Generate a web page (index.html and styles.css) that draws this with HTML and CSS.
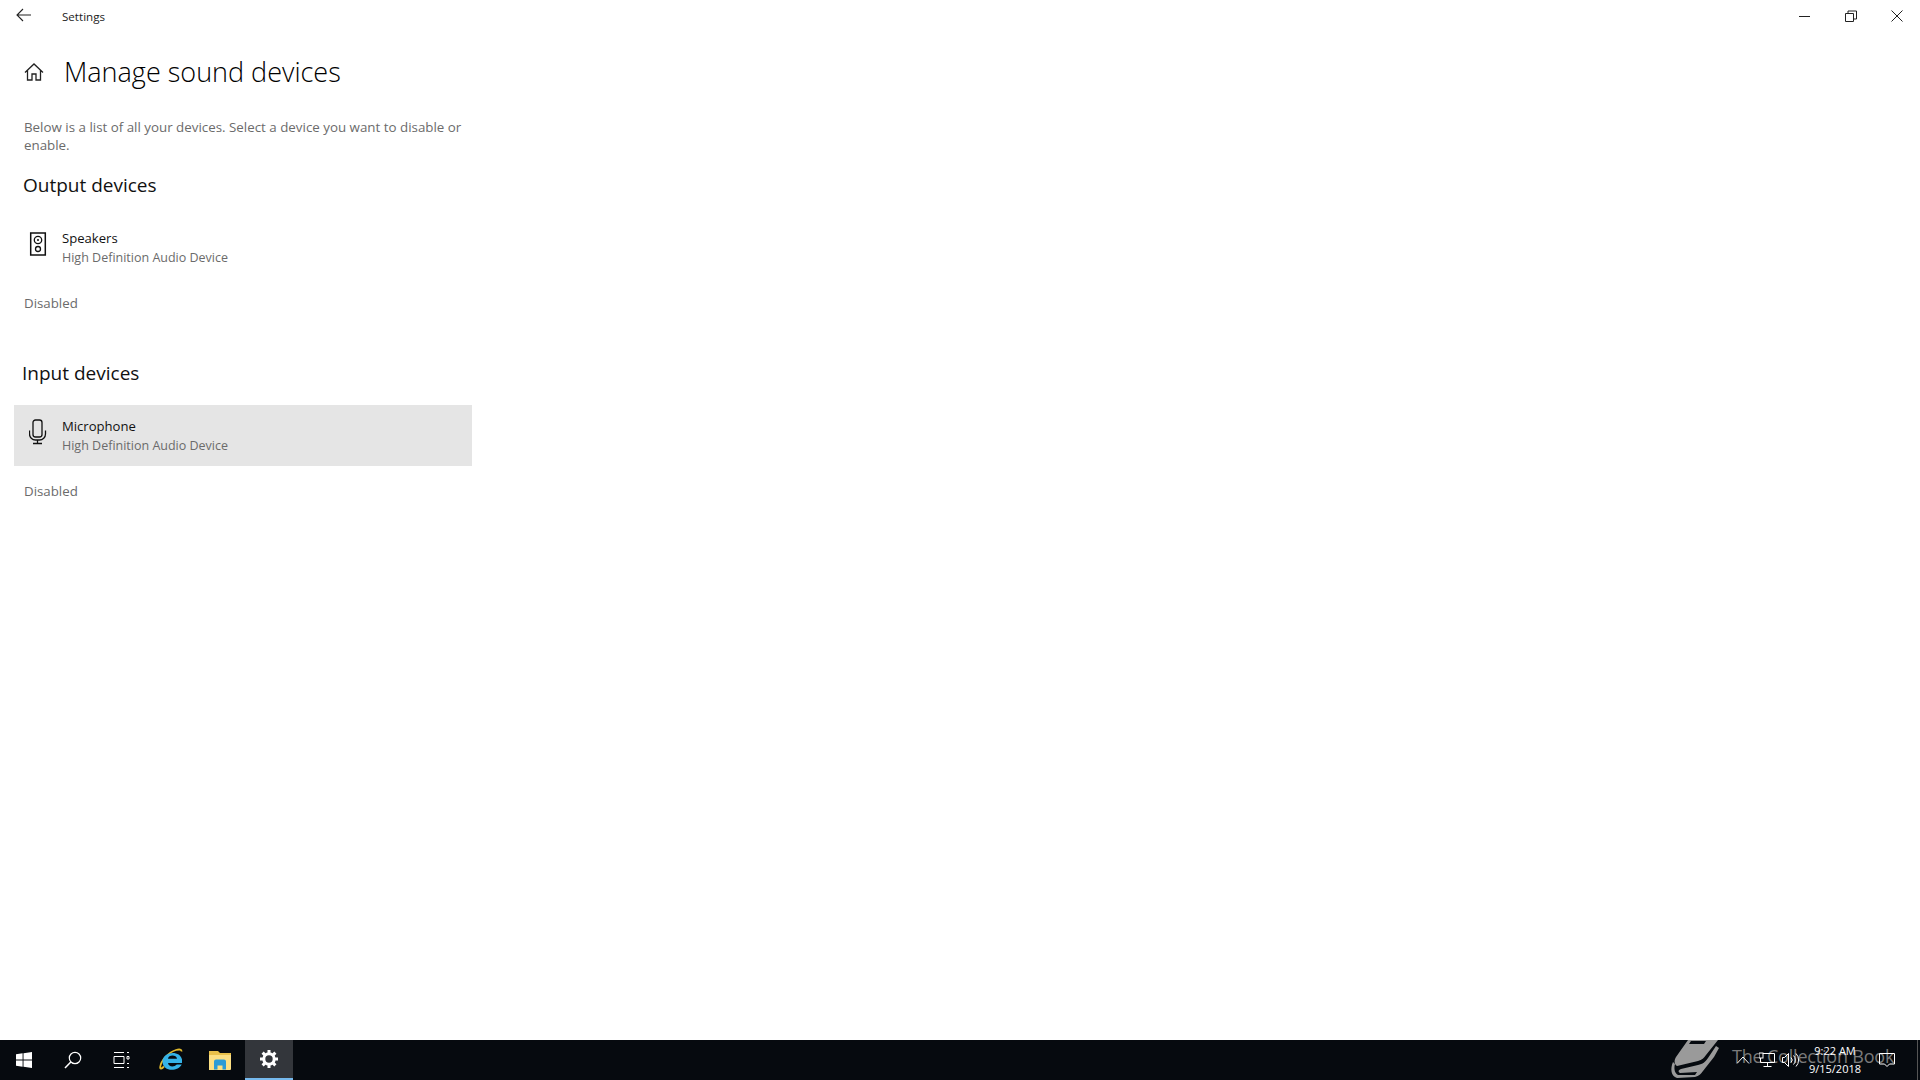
FILE: index.html
```html
<!DOCTYPE html>
<html lang="en">
<head>
<meta charset="UTF-8">
<title>Settings</title>
<link rel="stylesheet" href="styles.css">
</head>
<body>
<div class="window">
    <div class="titlebar">
        <div class="titlebar-left">
            <svg class="back-icon" width="16" height="14" viewBox="0 0 16 14"><path d="M7 1 1 7l6 6M1 7h14" fill="none" stroke="#222" stroke-width="1.1"/></svg>
            <span class="app-name">Settings</span>
        </div>
        <div class="window-buttons">
            <svg width="14" height="14" viewBox="0 0 14 14"><path d="M1 7.500h11" stroke="#222" stroke-width="1"/></svg>
            <svg width="14" height="14" viewBox="0 0 14 14"><path d="M1.500 4.500h8v8h-8zM4 4.500V2h8.500v8H9.500" fill="none" stroke="#222" stroke-width="1"/></svg>
            <svg width="14" height="14" viewBox="0 0 14 14"><path d="M1.500 1.500l11 11M12.500 1.500l-11 11" stroke="#222" stroke-width="1"/></svg>
        </div>
    </div>

    <div class="content">
        <div class="page-title">
            <svg class="home-icon" width="20" height="20" viewBox="0 0 20 20"><path d="M1 10.500 10 2l9 8.500M3.500 8.500V18H8v-6h4v6h4.500V8.500" fill="none" stroke="#222" stroke-width="1.300"/></svg>
            <h1>Manage sound devices</h1>
        </div>
        <p class="description">Below is a list of all your devices. Select a device you want to disable or enable.</p>

        <h2 class="section-first">Output devices</h2>
        <div class="device">
            <svg class="device-icon" width="18" height="24" viewBox="0 0 18 24"><rect x="1.700" y="1" width="14.600" height="22" fill="none" stroke="#111" stroke-width="1.500"/><circle cx="9" cy="8" r="3.700" fill="none" stroke="#111" stroke-width="1.300"/><circle cx="9" cy="8" r="1" fill="#111"/><circle cx="9" cy="17" r="2.500" fill="none" stroke="#111" stroke-width="1.300"/></svg>
            <div class="device-text">
                <div class="device-name">Speakers</div>
                <div class="device-sub">High Definition Audio Device</div>
            </div>
        </div>
        <div class="status">Disabled</div>

        <h2 class="section-second">Input devices</h2>
        <div class="device device-selected">
            <svg class="device-icon" width="18" height="26" viewBox="0 0 18 26"><rect x="4" y="1" width="9" height="17" rx="2.500" fill="none" stroke="#111" stroke-width="1.300"/><path d="M.5 11.500V15a6 6 0 0 0 6 6h4a6 6 0 0 0 6-6v-3.500M8.500 21v3.500M4 24.500h9" fill="none" stroke="#111" stroke-width="1.300"/></svg>
            <div class="device-text">
                <div class="device-name">Microphone</div>
                <div class="device-sub">High Definition Audio Device</div>
            </div>
        </div>
        <div class="status">Disabled</div>
    </div>
</div>

<div class="taskbar">
    <div class="task-items">
        <div class="task-item">
            <svg width="16" height="16" viewBox="0 0 16 16"><path d="M0 2.300 6.600 1.300v6.300H0zM7.500 1.200 16 0v7.600H7.500zM0 8.500h6.600v6.300L0 13.800zM7.500 8.500H16V16l-8.500-1.200z" fill="#fff"/></svg>
        </div>
        <div class="task-item">
            <svg width="18" height="18" viewBox="0 0 18 18"><circle cx="11" cy="7" r="5.700" fill="none" stroke="#fff" stroke-width="1.200"/><path d="M6.800 11 1 17" stroke="#fff" stroke-width="1.500"/></svg>
        </div>
        <div class="task-item">
            <svg width="17" height="16" viewBox="0 0 17 16"><path d="M1 .5h10M1 15.500h10M1 4.500h10v7H1zM14 .5h2M14 15.500h2M14 11.500h2M14 7h2V4.500h-2z" fill="none" stroke="#fff" stroke-width="1"/></svg>
        </div>
        <div class="task-item">
            <svg width="24" height="24" viewBox="0 0 24 24"><path d="M5 18.500C2.500 21 1 21.500 1.200 19 2 13 9 4.500 17 2c3.500-1 5.800-.500 5.500 1.500" fill="none" stroke="#e0b92c" stroke-width="1.800"/><path d="M23 15H9c.500 4 6 4.500 8.800 1.500h4.900C19 24 3.500 24 3.500 13.500 3.500 3.500 21 1.500 23 11.500zM9 10.800h9c-.500-4.300-8.500-4.300-9 0z" fill="#35b4e8" fill-rule="evenodd"/></svg>
        </div>
        <div class="task-item">
            <svg width="22" height="20" viewBox="0 0 22 20"><path d="M0 1h9l2 2h11v5H0z" fill="#e8c04a"/><path d="M0 5h22v14a1 1 0 0 1-1 1H0z" fill="#fbdf83"/><path d="M5 19.500V11.500a2 2 0 0 1 2-2h8a2 2 0 0 1 2 2v8h-3.500v-4h-5v4z" fill="#2a9bd6"/></svg>
        </div>
        <div class="task-item task-item-active">
            <svg width="18" height="18" viewBox="0 0 18 18"><circle cx="9" cy="9" r="5.200" fill="none" stroke="#fff" stroke-width="3"/><path d="M9 0v3.500M9 14.500V18M0 9h3.500M14.500 9H18M2.600 2.600l2.500 2.500M12.900 12.900l2.500 2.500M2.600 15.400l2.500-2.500M12.900 5.100l2.500-2.500" stroke="#fff" stroke-width="3"/></svg>
        </div>
    </div>

    <div class="tray">
        <svg class="tray-chevron" width="14" height="8" viewBox="0 0 14 8"><path d="M1 7.500 7 1l6 6.500" fill="none" stroke="#fff" stroke-width="1"/></svg>
        <svg class="tray-network" width="16" height="16" viewBox="0 0 16 16"><path d="M1.500 1.500h14v9h-14zM8.500 10.500v4M4.500 14.500h8" fill="none" stroke="#fff" stroke-width="1"/><rect x="0" y="1" width="4" height="5" fill="#060a0f" stroke="#fff" stroke-width="1"/></svg>
        <svg class="tray-volume" width="18" height="16" viewBox="0 0 18 16"><path d="M.5 5.500h2L6.500 1.500v13l-4-4h-2zM9 5.500a3.500 3.500 0 0 1 0 5M11.500 3.500a6.500 6.500 0 0 1 0 9M14 1.500a9.500 9.500 0 0 1 0 13" fill="none" stroke="#fff" stroke-width="1"/></svg>
        <div class="clock">
            <div>9:22 AM</div>
            <div>9/15/2018</div>
        </div>
        <svg class="tray-notify" width="16" height="16" viewBox="0 0 16 16"><path d="M.5 1.500h15v10.500h-5L8 14.500 5.500 12h-5z" fill="none" stroke="#fff" stroke-width="1"/></svg>
        <div class="show-desktop"></div>
    </div>

    <!-- watermark sits behind the tray icons -->
    <div class="watermark">
        <svg width="52" height="40" viewBox="0 0 52 40"><path d="M18 0h30L36 15c-2 3-4 5-8 6L7 26c-3-2-3-6-1-9zM21 1l-2 3 15 0 2-3z" fill="#9a9a9a" fill-rule="evenodd"/><path d="M3 22C0 29 1 36 7 38l18-1c4-1 6-3 8-6l11-14 5-9-3-2-8 12c-3 4-5 6-10 7L11 29c-3 1-3 3-1 4l17-1-2 3-17 0C4 33 4 27 5 24z" fill="#9a9a9a"/></svg>
        <span class="watermark-text">The Collection Book</span>
    </div>
</div>
</body>
</html>
```

FILE: styles.css
```css
:root {
    --text-color: #111;
    --muted-color: #6b6b6b;
    --selected-color: #e5e5e5;
    --taskbar-color: #060a0f;
}

html, body {
    margin: 0;
    padding: 0;
}

body {
    width: 1920px;
    height: 1080px;
    overflow: hidden;
    display: flex;
    flex-direction: column;
    background-color: white;
    color: var(--text-color);
    font-family: "Open Sans", "Noto Sans", sans-serif;
}

.window {
    flex: 1;
}

.titlebar {
    height: 32px;
    display: flex;
    justify-content: space-between;
    align-items: center;
}

.titlebar-left {
    display: flex;
    align-items: center;
}

.back-icon {
    margin-left: 16px;
    margin-top: -2px;
}

.app-name {
    margin-left: 30px;
    font-size: 11.600px;
    color: #222;
}

.window-buttons {
    display: flex;
    gap: 32px;
    padding-right: 16px;
}

.content {
    width: 458px;
    padding-left: 14px;
}

.page-title {
    display: flex;
    align-items: center;
    height: 44px;
    margin-top: 17px;
    padding-left: 10px;
}

.home-icon {
    margin-top: 2px;
}

h1 {
    margin: 0 0 0 20px;
    font-size: 27px;
    font-weight: 300;
    color: #000;
}

.description {
    margin: 25px 0 0;
    padding-left: 10px;
    font-size: 13.350px;
    line-height: 18px;
    color: var(--muted-color);
}

h2 {
    margin: 0;
    padding-left: 9px;
    font-size: 19px;
    font-weight: 400;
    line-height: 28px;
}

.section-first {
    margin-top: 17px;
}

.section-second {
    margin-top: 46px;
    padding-left: 8px;
}

.device {
    height: 61px;
    margin-top: 18px;
    display: flex;
    align-items: center;
}

.device-selected {
    background-color: var(--selected-color);
}

.device-icon {
    margin-left: 15px;
    margin-right: 15px;
    margin-bottom: 7px;
}

.device-text {
    margin-top: 1px;
}

.device-name {
    font-size: 13.100px;
    line-height: 19px;
}

.device-sub {
    font-size: 12.500px;
    line-height: 19px;
    color: var(--muted-color);
}

.status {
    margin-top: 15px;
    padding-left: 10px;
    font-size: 13.300px;
    line-height: 20px;
    color: var(--muted-color);
}

.taskbar {
    position: relative;
    height: 40px;
    display: flex;
    justify-content: space-between;
    background-color: var(--taskbar-color);
    color: white;
}

.task-items {
    display: flex;
}

.task-item {
    width: 49px;
    height: 40px;
    box-sizing: border-box;
    padding-right: 2px;
    display: flex;
    align-items: center;
    justify-content: center;
}

.task-item-active {
    width: 48px;
    padding-right: 0;
    background-color: #33363b;
    border-bottom: 2px solid #76b9ed;
}

.tray {
    position: relative;
    z-index: 1;
    display: flex;
    align-items: center;
}

.tray-chevron {
    margin-right: 9px;
}

.tray-network {
    margin-right: 7px;
}

.tray-volume {
    margin-right: 4px;
}

.clock {
    width: 62px;
    font-size: 11px;
    line-height: 18px;
    text-align: center;
}

.tray-notify {
    margin-left: 13px;
    margin-right: 22px;
}

.show-desktop {
    width: 1px;
    height: 40px;
    margin-right: 2px;
    background-color: #555;
}

.watermark {
    position: absolute;
    left: 1670px;
    top: 0;
    height: 40px;
    display: flex;
    align-items: center;
    gap: 10px;
    pointer-events: none;
}

.watermark-text {
    margin-bottom: 9px;
    font-size: 18px;
    letter-spacing: -0.2px;
    color: #7a7a7a;
    white-space: nowrap;
}
```
